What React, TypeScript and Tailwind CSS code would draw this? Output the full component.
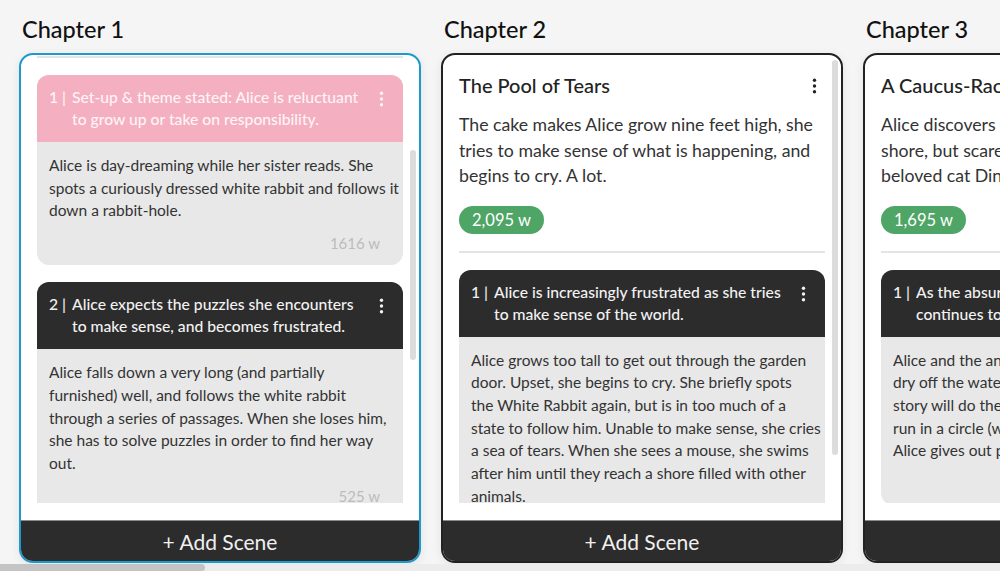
import React from 'react'

interface Scene {
  title: string
  body: string
  words: string
  tone: 'pink' | 'dark'
}

interface Chapter {
  label: string
  title: string
  summary: string
  words: string
  scenes: Scene[]
  selected?: boolean
  scrolled?: boolean
  thumb?: { top: number; height: number }
}

// line breaks are kept as in the board so the cards wrap the same way
const chapters: Chapter[] = [
  {
    label: 'Chapter 1',
    title: 'Down the Rabbit-Hole',
    summary: 'Alice follows a white rabbit down a hole and finds herself in a strange hall.',
    words: '2,141 w',
    selected: true,
    scrolled: true,
    thumb: { top: 95, height: 210 },
    scenes: [
      {
        title: 'Set-up & theme stated: Alice is reluctuant\nto grow up or take on responsibility.',
        body: 'Alice is day-dreaming while her sister reads. She\nspots a curiously dressed white rabbit and follows it\ndown a rabbit-hole.',
        words: '1616 w',
        tone: 'pink',
      },
      {
        title: 'Alice expects the puzzles she encounters\nto make sense, and becomes frustrated.',
        body: 'Alice falls down a very long (and partially\nfurnished) well, and follows the white rabbit\nthrough a series of passages. When she loses him,\nshe has to solve puzzles in order to find her way\nout.',
        words: '525 w',
        tone: 'dark',
      },
    ],
  },
  {
    label: 'Chapter 2',
    title: 'The Pool of Tears',
    summary: 'The cake makes Alice grow nine feet high, she\ntries to make sense of what is happening, and\nbegins to cry. A lot.',
    words: '2,095 w',
    thumb: { top: 5, height: 395 },
    scenes: [
      {
        title: 'Alice is increasingly frustrated as she tries\nto make sense of the world.',
        body: 'Alice grows too tall to get out through the garden\ndoor. Upset, she begins to cry. She briefly spots\nthe White Rabbit again, but is in too much of a\nstate to follow him. Unable to make sense, she cries\na sea of tears. When she sees a mouse, she swims\nafter him until they reach a shore filled with other\nanimals.',
        words: '1,210 w',
        tone: 'dark',
      },
    ],
  },
  {
    label: 'Chapter 3',
    title: 'A Caucus-Race and a Long Tale',
    summary: 'Alice discovers herself on the\nshore, but scares the animals with talk of her\nbeloved cat Dinah.',
    words: '1,695 w',
    scenes: [
      {
        title: 'As the absurdity of Wonderland\ncontinues to confuse her, Alice tries to fit in.',
        body: 'Alice and the animals need to\ndry off the water. The Dodo decides a\nstory will do the trick, so they all\nrun in a circle (with no winner), and\nAlice gives out prizes.',
        words: '1,695 w',
        tone: 'dark',
      },
    ],
  },
]

function Kebab({ className = '' }: { className?: string }) {
  return (
    <svg width="5" height="16" viewBox="0 0 5 16" className={className} fill="currentColor">
      <circle cx="2.5" cy="2.2" r="1.7" />
      <circle cx="2.5" cy="8" r="1.7" />
      <circle cx="2.5" cy="13.8" r="1.7" />
    </svg>
  )
}

function SceneCard({ scene, index }: { scene: Scene; index: number }) {
  const head = scene.tone === 'pink' ? 'bg-[#f4afc0] text-[#fff4f7]' : 'bg-[#2c2c2c] text-[#f2f2f2]'
  return (
    <div className="rounded-xl overflow-hidden bg-[#e8e8e8] shrink-0">
      <div className={`flex items-start pl-3 pr-[19px] pt-[11px] pb-3 text-[15.7px] leading-[22px] font-medium ${head}`}>
        <span className="shrink-0 mr-[6px]">{index} |</span>
        <span className="flex-1 whitespace-pre overflow-hidden">{scene.title}</span>
        <Kebab className="shrink-0 mt-[5px] ml-2" />
      </div>
      <div className="pl-3 pr-1 pt-3 pb-[11px]">
        <p className="whitespace-pre overflow-hidden text-[15.5px] leading-[22.7px] text-[#333]">{scene.body}</p>
        {scene.words && (
          <div className="mt-[10px] pr-[19px] text-right text-[15px] leading-[22px] text-[#bcbcbc]">{scene.words}</div>
        )}
      </div>
    </div>
  )
}

function ChapterColumn({ chapter }: { chapter: Chapter }) {
  const border = chapter.selected ? 'border-[#1b9ad2]' : 'border-[#222]'
  return (
    <div className="w-[402px] shrink-0 flex flex-col">
      <h2 className="pl-[3px] pt-[13px] pb-[7px] text-[23.5px] leading-[33px] font-medium text-[#111]">{chapter.label}</h2>
      <div className={`h-[510px] flex flex-col rounded-[14px] border-2 ${border} bg-white overflow-hidden shadow-[0_2px_10px_rgba(0,0,0,0.08)]`}>
        <div className="relative h-[448px] shrink-0 overflow-hidden">
          <div className="flex flex-col pl-4 pr-4">
            {chapter.scrolled ? (
              <div className="mt-px h-[2px] bg-[#e4e4e4]" />
            ) : (
              <>
                <div className="flex items-start justify-between pt-[16px]">
                  <h3 className="whitespace-nowrap text-[20px] leading-[28px] font-medium text-[#222]">{chapter.title}</h3>
                  <Kebab className="shrink-0 mt-[7px] mr-2 text-[#222]" />
                </div>
                <p className="mt-[13px] whitespace-pre text-[17.7px] leading-[25.5px] text-[#333]">{chapter.summary}</p>
                <div className="mt-[17px]">
                  <span className="inline-block rounded-full bg-[#4fa566] px-[13px] text-[16.5px] leading-[28px] text-white">{chapter.words}</span>
                </div>
                <div className="mt-[17px] h-[2px] bg-[#e4e4e4]" />
              </>
            )}
            <div className="mt-[17px] flex flex-col gap-[17px]">
              {chapter.scenes.map((s, i) => (
                <SceneCard key={i} scene={s} index={i + 1} />
              ))}
            </div>
          </div>
          {chapter.thumb && (
            <div
              className="absolute right-[3px] w-[6px] rounded-full bg-[#dcdcdc]"
              style={{ top: chapter.thumb.top, height: chapter.thumb.height }}
            />
          )}
        </div>
        <div className="h-[17px] shrink-0" />
        <button className="flex-1 border-t border-[#8a8a8a] bg-[#2c2c2c] text-[21px] text-[#f0f0f0] pt-px">+ Add Scene</button>
      </div>
    </div>
  )
}

export default function App() {
  return (
    <div className="h-[571px] w-[1000px] overflow-hidden bg-[#f5f5f5] flex flex-col" style={{ fontFamily: 'Lato, "Noto Sans", sans-serif' }}>
      <div className="flex-1 flex gap-5 pl-[19px] overflow-hidden">
        {chapters.map((c) => (
          <ChapterColumn key={c.label} chapter={c} />
        ))}
      </div>
      <div className="h-[7px] shrink-0 bg-[#ececec]">
        <div className="h-full w-[205px] rounded-r-full bg-[#c4c4c4]" />
      </div>
    </div>
  )
}
